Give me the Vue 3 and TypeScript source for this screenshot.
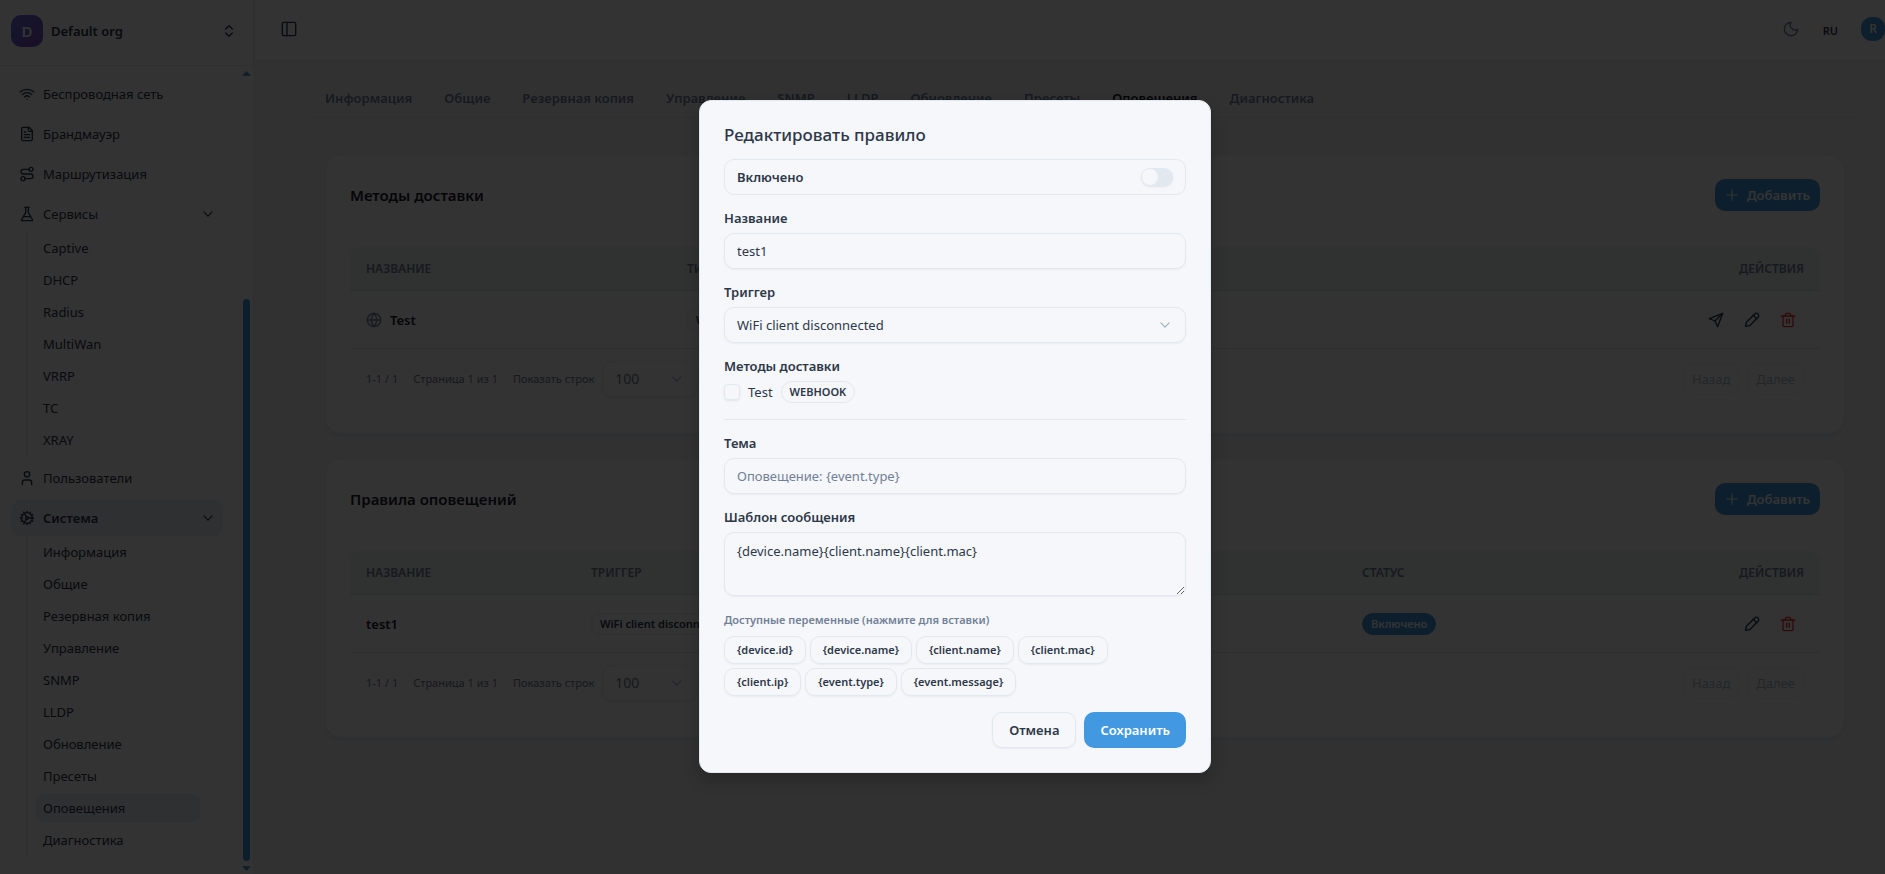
<script setup lang="ts">
import { ref } from 'vue'

interface NavItem {
  label: string
  icon: string
  active?: boolean
  children?: string[]
}

const icons: Record<string, string[]> = {
  wifi: ['M12 20h.01', 'M2 8.8a15 15 0 0 1 20 0', 'M5 12.9a10 10 0 0 1 14 0', 'M8.5 16.4a5 5 0 0 1 7 0'],
  file: ['M15 2H6a2 2 0 0 0-2 2v16a2 2 0 0 0 2 2h12a2 2 0 0 0 2-2V7Z', 'M14 2v4a2 2 0 0 0 2 2h4', 'M10 9H8', 'M16 13H8', 'M16 17H8'],
  route: ['M9 19a3 3 0 1 1-6 0a3 3 0 1 1 6 0', 'M9 19h8.5a3.5 3.5 0 0 0 0-7h-11a3.5 3.5 0 0 1 0-7H15', 'M21 5a3 3 0 1 1-6 0a3 3 0 1 1 6 0'],
  flask: ['M10 2v7.5a2 2 0 0 1-.2.9L3.7 20.6A1 1 0 0 0 4.6 22h14.8a1 1 0 0 0 .9-1.4L14.2 10.4a2 2 0 0 1-.2-.9V2', 'M8.5 2h7', 'M7 16h10'],
  user: ['M19 22v-3a4 4 0 0 0-4-4H9a4 4 0 0 0-4 4v3', 'M16 6.500a4 4 0 1 1-8 0a4 4 0 1 1 8 0'],
  cog: ['M20 12a8 8 0 1 1-16 0a8 8 0 1 1 16 0', 'M14 12a2 2 0 1 1-4 0a2 2 0 1 1 4 0', 'M12 2v2', 'M12 22v-2', 'M17 20.700l-1-1.700', 'M11 10.300L7 3.300', 'M20.700 17l-1.700-1', 'M3.300 7l1.700 1', 'M14 12h8', 'M2 12h2', 'M20.700 7l-1.700 1', 'M3.300 17l1.700-1', 'M17 3.300l-1 1.700', 'M11 13.700l-4 7'],
  down: ['M5 8.500l7 7l7-7'],
  updown: ['M7 15l5 5l5-5', 'M7 9l5-5l5 5'],
  panel: ['M4 2h16a2 2 0 0 1 2 2v16a2 2 0 0 1-2 2H4a2 2 0 0 1-2-2V4a2 2 0 0 1 2-2', 'M9 2v20'],
  moon: ['M12 2a7.500 7.500 0 0 0 10 10.500A10 10 0 1 1 12 2'],
  plus: ['M3 12h18', 'M12 3v18'],
  globe: ['M22 12a10 10 0 1 1-20 0a10 10 0 1 1 20 0', 'M12 2a14.500 14.500 0 0 0 0 20a14.500 14.500 0 0 0 0-20', 'M2 12h20'],
  send: ['M22 2L2 10l8.500 3.500L14.500 22Z', 'M22 2L10.500 13.500'],
  pencil: ['M2.500 21.500l1-6L16 3a3.500 3.500 0 0 1 5 5L8.500 20.500Z', 'M14 5l5 5'],
  trash: ['M2 6h20', 'M4.500 6v14a2 2 0 0 0 2 2h11a2 2 0 0 0 2-2V6', 'M8 6V4a2 2 0 0 1 2-2h4a2 2 0 0 1 2 2v2', 'M10 11v6', 'M14 11v6'],
}

const sections = ['Информация', 'Общие', 'Резервная копия', 'Управление', 'SNMP', 'LLDP', 'Обновление', 'Пресеты', 'Оповещения', 'Диагностика']
const current = 'Оповещения'

const nav: NavItem[] = [
  { label: 'Беспроводная сеть', icon: 'wifi' },
  { label: 'Брандмауэр', icon: 'file' },
  { label: 'Маршрутизация', icon: 'route' },
  { label: 'Сервисы', icon: 'flask', children: ['Captive', 'DHCP', 'Radius', 'MultiWan', 'VRRP', 'TC', 'XRAY'] },
  { label: 'Пользователи', icon: 'user' },
  { label: 'Система', icon: 'cog', active: true, children: sections },
]

const cards = [
  { id: 'methods', title: 'Методы доставки', second: 'ТИП' },
  { id: 'rules', title: 'Правила оповещений', second: 'ТРИГГЕР' },
]

const variables = ['{device.id}', '{device.name}', '{client.name}', '{client.mac}', '{client.ip}', '{event.type}', '{event.message}']

const enabled = ref(false)
const name = ref('test1')
const trigger = ref('WiFi client disconnected')
const useTest = ref(false)
const subject = ref('')
const subjectHint = 'Оповещение: {event.type}'
const message = ref('{device.name}{client.name}{client.mac}')
const insert = (v: string) => {
  message.value += v
}
</script>

<template>
  <div class="page">
    <aside class="sidebar">
      <button class="org" type="button">
        <span class="org-mark">D</span>
        <span class="org-name">Default org</span>
        <svg class="icon" viewBox="0 0 24 24"><path v-for="d in icons.updown" :key="d" :d="d" /></svg>
      </button>
      <div class="side-body">
        <nav class="nav">
          <div v-for="item in nav" :key="item.label">
            <a href="#" class="nav-item" :class="{ active: item.active }">
              <svg class="icon" viewBox="0 0 24 24"><path v-for="d in icons[item.icon]" :key="d" :d="d" /></svg>
              <span class="grow">{{ item.label }}</span>
              <svg v-if="item.children" class="icon small" viewBox="0 0 24 24"><path v-for="d in icons.down" :key="d" :d="d" /></svg>
            </a>
            <div v-if="item.children" class="sub">
              <a v-for="c in item.children" :key="c" href="#" class="sub-item" :class="{ active: c === current }">{{ c }}</a>
            </div>
          </div>
        </nav>
        <div class="rail">
          <svg class="arrow" viewBox="0 0 10 5"><path d="M0 5L5 0L10 5Z" /></svg>
          <div class="rail-track"><div class="rail-thumb"></div></div>
          <svg class="arrow" viewBox="0 0 10 5"><path d="M0 0L5 5L10 0Z" /></svg>
        </div>
      </div>
    </aside>

    <main class="main">
      <header class="topbar">
        <button type="button" class="bare" aria-label="Меню"><svg class="icon" viewBox="0 0 24 24"><path v-for="d in icons.panel" :key="d" :d="d" /></svg></button>
        <span class="grow"></span>
        <button type="button" class="bare muted" aria-label="Тема"><svg class="icon" viewBox="0 0 24 24"><path v-for="d in icons.moon" :key="d" :d="d" /></svg></button>
        <button type="button" class="bare lang">RU</button>
        <button type="button" class="user">R</button>
      </header>

      <div class="content">
        <nav class="tabs">
          <a v-for="s in sections" :key="s" href="#" class="tab" :class="{ active: s === current }">{{ s }}</a>
        </nav>

        <section v-for="card in cards" :key="card.id" class="card">
          <div class="card-head">
            <h2>{{ card.title }}</h2>
            <button type="button" class="primary add">
              <svg class="icon small" viewBox="0 0 24 24"><path v-for="d in icons.plus" :key="d" :d="d" /></svg>
              Добавить
            </button>
          </div>
          <table :class="card.id">
            <thead>
              <tr>
                <th class="c-name">НАЗВАНИЕ</th>
                <th>{{ card.second }}</th>
                <th v-if="card.id === 'rules'" class="c-status">СТАТУС</th>
                <th class="c-actions">ДЕЙСТВИЯ</th>
              </tr>
            </thead>
            <tbody>
              <tr>
                <td class="strong">
                  <span v-if="card.id === 'methods'" class="with-icon">
                    <svg class="icon muted" viewBox="0 0 24 24"><path v-for="d in icons.globe" :key="d" :d="d" /></svg>
                    Test
                  </span>
                  <span v-else>test1</span>
                </td>
                <td><span class="badge">{{ card.id === 'methods' ? 'WEBHOOK' : 'WiFi client disconnected' }}</span></td>
                <td v-if="card.id === 'rules'"><span class="badge on">Включено</span></td>
                <td class="c-actions">
                  <div class="actions">
                    <button v-if="card.id === 'methods'" type="button" class="act" aria-label="Отправить"><svg class="icon" viewBox="0 0 24 24"><path v-for="d in icons.send" :key="d" :d="d" /></svg></button>
                    <button type="button" class="act" aria-label="Изменить"><svg class="icon" viewBox="0 0 24 24"><path v-for="d in icons.pencil" :key="d" :d="d" /></svg></button>
                    <button type="button" class="act danger" aria-label="Удалить"><svg class="icon" viewBox="0 0 24 24"><path v-for="d in icons.trash" :key="d" :d="d" /></svg></button>
                  </div>
                </td>
              </tr>
            </tbody>
          </table>
          <div class="pager">
            <span>1-1 / 1</span>
            <span>Страница 1 из 1</span>
            <div class="group">
              <label :for="card.id + '-size'">Показать строк</label>
              <div class="select">
                <select :id="card.id + '-size'"><option>100</option></select>
                <svg class="icon small" viewBox="0 0 24 24"><path v-for="d in icons.down" :key="d" :d="d" /></svg>
              </div>
            </div>
            <span class="grow"></span>
            <div class="group">
              <button type="button" class="page-btn" disabled>Назад</button>
              <button type="button" class="page-btn" disabled>Далее</button>
            </div>
          </div>
        </section>
      </div>
    </main>

    <div class="overlay">
      <form class="modal" role="dialog" aria-labelledby="dlg-title" @submit.prevent>
        <h1 id="dlg-title">Редактировать правило</h1>
        <div class="switch-row">
          <label for="f-enabled">Включено</label>
          <input id="f-enabled" v-model="enabled" type="checkbox" role="switch" class="switch" />
        </div>
        <div class="field">
          <label for="f-name">Название</label>
          <input id="f-name" v-model="name" type="text" class="control" />
        </div>
        <div class="field">
          <label for="f-trigger">Триггер</label>
          <div class="select">
            <select id="f-trigger" v-model="trigger"><option>WiFi client disconnected</option></select>
            <svg class="icon small" viewBox="0 0 24 24"><path v-for="d in icons.down" :key="d" :d="d" /></svg>
          </div>
        </div>
        <div class="field">
          <span class="label">Методы доставки</span>
          <div class="method">
            <input id="f-test" v-model="useTest" type="checkbox" class="check" />
            <label for="f-test">Test</label>
            <span class="badge">WEBHOOK</span>
          </div>
        </div>
        <hr />
        <div class="field">
          <label for="f-subject">Тема</label>
          <input id="f-subject" v-model="subject" type="text" class="control" :placeholder="subjectHint" />
        </div>
        <div class="field">
          <label for="f-message">Шаблон сообщения</label>
          <textarea id="f-message" v-model="message" class="control area"></textarea>
        </div>
        <div class="field">
          <span class="hint">Доступные переменные (нажмите для вставки)</span>
          <div class="chips">
            <button v-for="v in variables" :key="v" type="button" class="chip" @click="insert(v)">{{ v }}</button>
          </div>
        </div>
        <div class="foot">
          <button type="button" class="secondary">Отмена</button>
          <button type="submit" class="primary">Сохранить</button>
        </div>
      </form>
    </div>
  </div>
</template>

<style>
body {
  margin: 0;
  overflow: hidden;
}
</style>

<style scoped>
.page,
.page * {
  box-sizing: border-box;
}
.page {
  position: relative;
  display: flex;
  height: 100vh;
  overflow: hidden;
  background: #f5f6f8;
  color: #2d3748;
  font: 400 13px/20px 'Noto Sans', 'Open Sans', sans-serif;
}
button,
input,
select,
textarea {
  font: inherit;
  color: inherit;
  margin: 0;
}
button {
  cursor: pointer;
}
a {
  color: inherit;
  text-decoration: none;
}
h1,
h2 {
  margin: 0;
}
.grow {
  flex: 1;
}
.icon {
  width: 16px;
  height: 16px;
  flex: none;
  fill: none;
  stroke: currentColor;
  stroke-width: 2;
  stroke-linecap: round;
  stroke-linejoin: round;
}
.icon.small {
  width: 14px;
  height: 14px;
}
.muted {
  color: #718096;
}

.sidebar {
  display: flex;
  flex-direction: column;
  flex: none;
  width: 255px;
  background: #fcfcfd;
  border-right: 2px solid #edf0f4;
}
.org {
  display: flex;
  align-items: center;
  gap: 8px;
  flex: none;
  height: 66px;
  padding: 0 16px 4px 11px;
  border: 0;
  border-bottom: 1px solid #e2e8f0;
  background: none;
  text-align: left;
}
.org-mark {
  display: grid;
  place-items: center;
  width: 32px;
  height: 32px;
  border-radius: 10px;
  background: linear-gradient(135deg, #6674e8, #8049b8);
  color: #fff;
  font-size: 15px;
  font-weight: 600;
}
.org-name {
  flex: 1;
  font-weight: 600;
}
.side-body {
  display: flex;
  flex: 1;
  min-height: 0;
}
.nav {
  display: flex;
  flex-direction: column;
  gap: 4px;
  flex: 1;
  padding: 10px 17px 0 11px;
  overflow: hidden;
}
.nav-item {
  display: flex;
  align-items: center;
  gap: 8px;
  height: 36px;
  padding: 0 8px;
  border-radius: 10px;
}
.nav-item.active {
  background: #ebf1f8;
  font-weight: 600;
}
.sub {
  margin: 0 23px 0 15px;
  padding: 2px 0 2px 9px;
  border-left: 1px solid #e2e8f0;
  display: flex;
  flex-direction: column;
  gap: 4px;
}
.sub-item {
  height: 28px;
  padding: 0 7px;
  border-radius: 8px;
  line-height: 28px;
}
.sub-item.active {
  background: #ebf1f8;
}
.rail {
  display: flex;
  flex-direction: column;
  align-items: center;
  width: 13px;
  padding: 5px 0 3px;
}
.arrow {
  width: 9px;
  height: 5px;
  fill: #4299e1;
}
.rail-track {
  display: flex;
  flex: 1;
  align-items: flex-end;
  padding: 5px 0;
}
.rail-thumb {
  width: 7px;
  height: 72%;
  border-radius: 4px;
  background: #4299e1;
}

.main {
  flex: 1;
  min-width: 0;
}
.topbar {
  display: flex;
  align-items: center;
  height: 61px;
  padding: 0 0 3px 26px;
  background: #fcfcfd;
  border-bottom: 1px solid #e2e8f0;
}
.bare {
  display: flex;
  padding: 0;
  border: 0;
  background: none;
}
.lang {
  margin: 0 23px 0 24px;
  padding-top: 4px;
  font-size: 11px;
  font-weight: 600;
}
.user {
  width: 24px;
  height: 24px;
  padding: 0;
  border: 0;
  border-radius: 11px;
  background: #4299e1;
  color: #fff;
  font-size: 12px;
  font-weight: 600;
}
.content {
  padding: 19px 24px 0 54px;
}
.tabs {
  display: flex;
  margin-bottom: 36px;
  border-bottom: 1px solid #e8ecf1;
}
.tab {
  padding: 8px 16px 9px;
  color: #718096;
  font-weight: 600;
}
.tab.active {
  color: #1a202c;
}
.card {
  margin: 0 16px 24px;
  padding: 24px;
  border: 1px solid #e9edf2;
  border-radius: 16px;
  background: #fcfcfd;
  box-shadow: 0 2px 2px #e2e8f0;
}
.card-head {
  display: flex;
  align-items: center;
  justify-content: space-between;
  margin-bottom: 36px;
}
h2 {
  color: #1a202c;
  font-size: 15px;
  font-weight: 600;
}
.primary {
  height: 36px;
  padding: 0 16px;
  border: 0;
  border-radius: 10px;
  background: #4299e1;
  color: #fff;
  font-weight: 600;
}
.add {
  display: flex;
  align-items: center;
  gap: 8px;
  height: 32px;
  padding: 0 10px;
}
table {
  width: 100%;
  border-collapse: separate;
  border-spacing: 0;
  table-layout: fixed;
}
th,
td {
  padding: 0 16px;
  border-bottom: 1px solid #dfe5ec;
  text-align: left;
}
th {
  height: 44px;
  background: #edf8f5;
  color: #718096;
  font-size: 12px;
  font-weight: 600;
}
th:first-child {
  border-top-left-radius: 10px;
}
th:last-child {
  border-top-right-radius: 10px;
}
td {
  height: 58px;
}
.methods .c-name {
  width: 321px;
}
.rules .c-name {
  width: 225px;
}
.c-status,
.c-actions {
  width: 237px;
}
.c-actions {
  text-align: right;
}
.strong {
  color: #1a202c;
  font-weight: 600;
}
.with-icon {
  display: flex;
  align-items: center;
  gap: 8px;
}
.badge {
  display: inline-block;
  height: 22px;
  padding: 0 8px;
  border: 1px solid #e2e8f0;
  border-radius: 11px;
  color: #2d3748;
  font-size: 11px;
  font-weight: 600;
  line-height: 20px;
  vertical-align: middle;
}
.badge.on {
  border-color: #4299e1;
  background: #4299e1;
  color: #fff;
}
.actions {
  display: flex;
  justify-content: flex-end;
  gap: 4px;
}
.act {
  display: grid;
  place-items: center;
  width: 32px;
  height: 32px;
  padding: 0;
  border: 0;
  background: none;
}
.danger {
  color: #f03030;
}
.pager {
  display: flex;
  align-items: center;
  gap: 15px;
  padding: 12px 16px;
  color: #718096;
  font-size: 11px;
}
.group {
  display: flex;
  align-items: center;
  gap: 8px;
}
.page-btn {
  height: 32px;
  padding: 0 8px;
  border: 1px solid #e9edf2;
  border-radius: 10px;
  background: none;
  opacity: 0.5;
  font-size: 13px;
}

.overlay {
  position: absolute;
  inset: 0;
  display: flex;
  align-items: center;
  justify-content: center;
  padding: 0 0 1px 25px;
  background: rgba(0, 0, 0, 0.8);
}
.modal {
  display: flex;
  flex-direction: column;
  gap: 16px;
  width: 512px;
  padding: 24px;
  border: 1px solid #e2e8f0;
  border-radius: 12px;
  background: #f6f7fb;
  box-shadow: 0 8px 16px rgba(0, 0, 0, 0.2);
}
h1 {
  margin-bottom: -2px;
  font-size: 17px;
  font-weight: 500;
  line-height: 20px;
}
.switch-row {
  display: flex;
  align-items: center;
  justify-content: space-between;
  height: 36px;
  padding: 0 12px;
  border: 1px solid #e2e8f0;
  border-radius: 10px;
  font-weight: 600;
}
.switch {
  appearance: none;
  display: flex;
  align-items: center;
  width: 32px;
  height: 18px;
  padding: 1px;
  border-radius: 9px;
  background: #e2e8f0;
  box-shadow: 0 1px 2px rgba(45, 55, 72, 0.1);
}
.switch::before {
  content: '';
  width: 16px;
  height: 16px;
  border-radius: 8px;
  background: #f6f7fb;
}
.switch:checked {
  justify-content: flex-end;
  background: #4299e1;
}
.field {
  display: flex;
  flex-direction: column;
  gap: 8px;
}
.field > label,
.label {
  font-weight: 600;
  line-height: 14px;
}
.control,
select {
  width: 100%;
  height: 36px;
  padding: 0 12px;
  border: 1px solid #e2e8f0;
  border-radius: 10px;
  outline: 0;
  background: transparent;
  box-shadow: 0 1px 2px rgba(45, 55, 72, 0.06);
}
.control::placeholder {
  color: #718096;
  opacity: 1;
}
.area {
  display: block;
  height: 64px;
  padding: 8px 12px;
  resize: vertical;
}
.select {
  display: grid;
  align-items: center;
}
.select > * {
  grid-area: 1 / 1;
}
.select select {
  appearance: none;
}
.select .icon {
  justify-self: end;
  margin-right: 14px;
  color: #a0aec0;
  pointer-events: none;
}
.pager .select {
  width: 96px;
  font-size: 14px;
}
.pager select {
  border-color: #e9edf2;
}
.method {
  display: flex;
  align-items: center;
  gap: 8px;
}
.check {
  appearance: none;
  width: 16px;
  height: 16px;
  border: 1px solid #e2e8f0;
  border-radius: 4px;
  box-shadow: 0 1px 2px rgba(45, 55, 72, 0.1);
}
.check:checked {
  background: #4299e1;
}
hr {
  width: 100%;
  height: 1px;
  margin: 0;
  border: 0;
  background: #e2e8f0;
}
.hint {
  color: #718096;
  font-size: 11px;
  font-weight: 600;
  line-height: 16px;
}
.chips {
  display: flex;
  flex-wrap: wrap;
  gap: 4px;
}
.chip,
.secondary {
  height: 28px;
  padding: 0 12px;
  border: 1px solid #e2e8f0;
  border-radius: 10px;
  background: none;
  box-shadow: 0 1px 2px rgba(45, 55, 72, 0.06);
  font-size: 11px;
  font-weight: 600;
}
.secondary {
  height: 36px;
  padding: 0 16px;
  font-size: 13px;
}
.foot {
  display: flex;
  justify-content: flex-end;
  gap: 8px;
}
</style>
